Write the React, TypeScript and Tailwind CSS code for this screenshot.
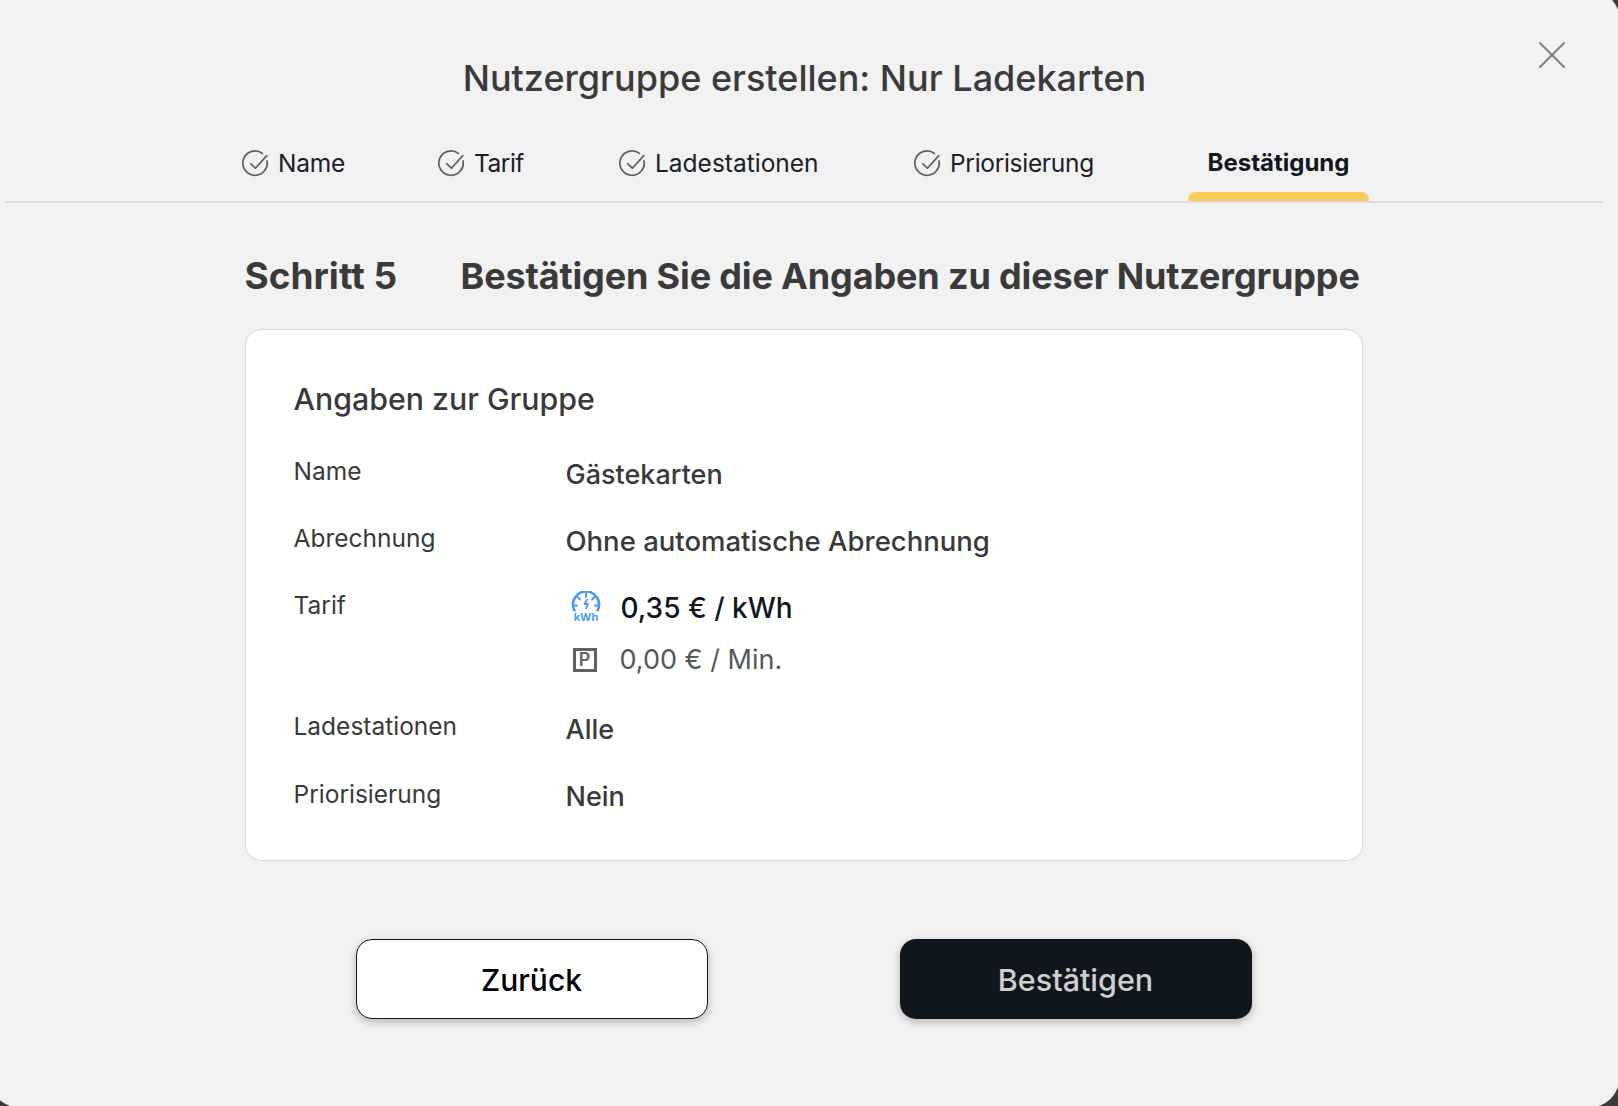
import React from 'react';
import { X } from 'lucide-react';

const font = "font-['Inter','Noto_Sans',sans-serif]";

function DoneIcon() {
  return (
    <svg width="28" height="28" viewBox="0 0 28 28" fill="none" className="shrink-0 mt-[2px]">
      <path
        d="M25 10.800A12.200 12.200 0 1 1 20.400 3.400"
        stroke="#5c5f63"
        strokeWidth="1.700"
        strokeLinecap="round"
      />
      <path
        d="M8.800 13.800l4.600 4.400L24.800 5.600"
        stroke="#5c5f63"
        strokeWidth="1.700"
        strokeLinecap="round"
        strokeLinejoin="round"
      />
    </svg>
  );
}

function EnergyIcon() {
  return (
    <svg width="30" height="34" viewBox="0 0 30 34" fill="none" className="shrink-0">
      <path d="M3.500 19.500A13 13 0 1 1 26.500 19.500" stroke="#4b9bf5" strokeWidth="2.600" strokeLinecap="round" />
      <path
        d="M15 2.500v3.500M6.500 6l2.500 2.500M23.500 6L21 8.500M2.500 14.500H6M27.500 14.500H24"
        stroke="#4b9bf5"
        strokeWidth="2"
        strokeLinecap="round"
      />
      <path d="M16 8.500l-2.500 4.500h3.500l-2 4.500" stroke="#4b9bf5" strokeWidth="1.800" strokeLinecap="round" strokeLinejoin="round" />
      <text x="15" y="29.500" textAnchor="middle" fontFamily="Inter, sans-serif" fontWeight="700" fontSize="11" fill="#4b9bf5">
        kWh
      </text>
    </svg>
  );
}

function ParkingIcon() {
  return (
    <div className="w-6 h-6 shrink-0 border-[3px] border-[#5f6266] flex items-center justify-center text-[#5f6266] text-[18px] leading-none font-semibold">
      P
    </div>
  );
}

const steps = [
  { label: 'Name', width: 'w-[196px]', tracking: 'tracking-[-0.2px]' },
  { label: 'Tarif', width: 'w-[181px]', tracking: 'tracking-[-0.5px]' },
  { label: 'Ladestationen', width: 'w-[295px]', tracking: 'tracking-normal' },
  { label: 'Priorisierung', width: 'w-[274px]', tracking: 'tracking-[-0.3px]' },
];

function Row({ label, className, children }: { label: string; className: string; children: React.ReactNode }) {
  return (
    <div className={`flex ${className}`}>
      <div className="w-[272px] shrink-0 text-[24.5px] leading-[30px] text-[#3a3a3a]">{label}</div>
      <div>{children}</div>
    </div>
  );
}

export default function App() {
  return (
    <div className={`w-[1618px] h-[1106px] bg-[#3a3a3a] overflow-hidden ${font}`}>
      <div className="relative w-[1631px] h-[1119px] -ml-[11px] -mt-[11px] bg-[#f2f2f2] rounded-[32px] flex flex-col items-center">
        <button className="absolute top-[42px] right-[44px] text-[#808080]">
          <X size={48} strokeWidth={1} />
        </button>

        <h1 className="mt-[65px] text-[36px] leading-[48px] font-medium text-[#3a3a3a]">
          Nutzergruppe erstellen: Nur Ladekarten
        </h1>

        <div className="mt-[27px] self-start ml-[16px] w-[1598px] border-b-2 border-[#dedede] h-[74px] flex items-start pl-[237px]">
          {steps.map((s) => (
            <div key={s.label} className={`${s.width} flex items-center gap-[8px] h-[68px] text-[24.5px] text-[#1b2029]`}>
              <DoneIcon />
              <span className={s.tracking}>{s.label}</span>
            </div>
          ))}
          <div className="relative w-[181px] h-[72px]">
            <div className="h-[68px] flex items-center justify-center text-[24px] font-bold text-[#12171f]">Bestätigung</div>
            <div className="absolute left-0 right-0 bottom-0 h-[9px] bg-[#f8cb5c] rounded-t-[8px]" />
          </div>
        </div>

        <div className="w-[1118px] -ml-[2px]">
          <div className="mt-[48px] flex items-center leading-[50px] font-bold text-[#3a3a3a] whitespace-nowrap">
            <span className="w-[216px] shrink-0 text-[37px]">Schritt 5</span>
            <span className="text-[36px] tracking-[-0.15px]">Bestätigen Sie die Angaben zu dieser Nutzergruppe</span>
          </div>

          <div className="mt-[28px] h-[532px] bg-white border border-[#d9d9d9] rounded-[16px] pl-[48px] pt-[50px]">
            <h2 className="text-[30.3px] leading-[38px] font-medium text-[#3a3a3a]">Angaben zur Gruppe</h2>
            <Row label="Name" className="mt-[38px]">
              <div className="text-[27px] leading-[36px] mt-[1px] font-medium text-[#3a3a3a]">Gästekarten</div>
            </Row>
            <Row label="Abrechnung" className="mt-[30px]">
              <div className="text-[27.5px] leading-[36px] font-medium text-[#3a3a3a]">Ohne automatische Abrechnung</div>
            </Row>
            <Row label="Tarif" className="mt-[31px]">
              <div className="flex items-center gap-[20px] h-[36px] ml-[5px]">
                <EnergyIcon />
                <span className="text-[28px] font-medium text-[#12171f]">0,35 € / kWh</span>
              </div>
              <div className="flex items-center gap-[23px] mt-[16px] h-[36px] ml-[7px]">
                <ParkingIcon />
                <span className="text-[27px] text-[#55585c]">0,00 € / Min.</span>
              </div>
            </Row>
            <Row label="Ladestationen" className="mt-[33px]">
              <div className="text-[27px] leading-[36px] mt-[1px] font-medium text-[#3a3a3a]">Alle</div>
            </Row>
            <Row label="Priorisierung" className="mt-[31px]">
              <div className="text-[27px] leading-[36px] font-medium text-[#3a3a3a]">Nein</div>
            </Row>
          </div>

          <div className="mt-[78px] flex justify-center gap-[192px]">
            <button className="w-[352px] h-[80px] pt-[2px] bg-white border border-[#12171f] rounded-[16px] text-[30px] font-medium text-black shadow-[0_3px_8px_rgba(0,0,0,0.25)]">
              Zurück
            </button>
            <button className="w-[352px] h-[80px] pt-[2px] bg-[#10161d] rounded-[16px] text-[30.5px] font-medium text-[#cfcfcf] shadow-[0_3px_8px_rgba(0,0,0,0.25)]">
              Bestätigen
            </button>
          </div>
        </div>
      </div>
    </div>
  );
}
